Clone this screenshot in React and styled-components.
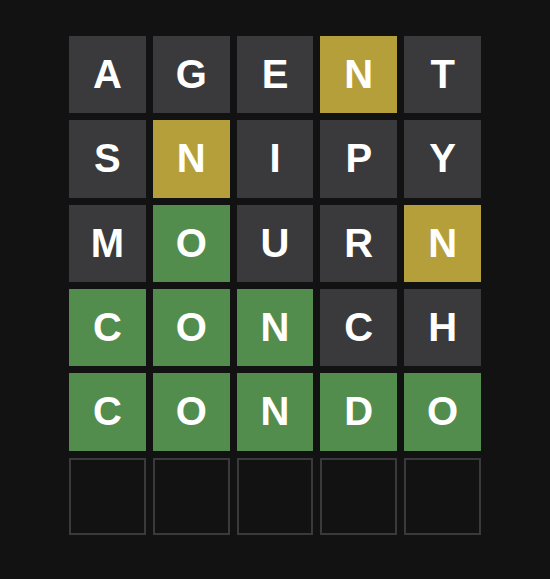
import React from 'react'
import styled, { createGlobalStyle } from 'styled-components'

const GlobalStyle = createGlobalStyle`
  html, body {
    margin: 0;
    padding: 0;
    background: #121213;
  }
  body {
    font-family: "Liberation Sans", Arial, sans-serif;
  }
`

const colors = {
  absent: '#3a3a3c',
  present: '#b59f3b',
  correct: '#538d4e',
}

const Page = styled.div`
  width: 550px;
  height: 579px;
  display: flex;
  justify-content: center;
  padding-top: 36px;
  box-sizing: border-box;
  background: #121213;
`

const Board = styled.div`
  width: 412px;
  height: 499px;
  display: grid;
  grid-template-rows: repeat(6, 1fr);
  gap: 7px;
`

const Row = styled.div`
  display: grid;
  grid-template-columns: repeat(5, 1fr);
  gap: 7px;
`

const Tile = styled.div`
  display: flex;
  align-items: center;
  justify-content: center;
  padding-bottom: 1px;
  box-sizing: border-box;
  background: ${p => (p.$state ? colors[p.$state] : 'transparent')};
  border: ${p => (p.$state ? 'none' : '2px solid #3a3a3c')};
  color: #ffffff;
  font-size: 40px;
  font-weight: 700;
  line-height: 1;
  text-transform: uppercase;
`

const guesses = [
  ['AGENT', 'aaapa'],
  ['SNIPY', 'apaaa'],
  ['MOURN', 'acaap'],
  ['CONCH', 'cccaa'],
  ['CONDO', 'ccccc'],
]

const codes = { a: 'absent', p: 'present', c: 'correct' }

export default function App() {
  const rows = [...guesses]
  while (rows.length < 6) rows.push(['     ', '     '])
  return (
    <>
      <GlobalStyle />
      <Page>
        <Board>
          {rows.map(([word, marks], r) => (
            <Row key={r}>
              {word.split('').map((ch, i) => (
                <Tile key={i} $state={codes[marks[i]]}>
                  {ch.trim()}
                </Tile>
              ))}
            </Row>
          ))}
        </Board>
      </Page>
    </>
  )
}
